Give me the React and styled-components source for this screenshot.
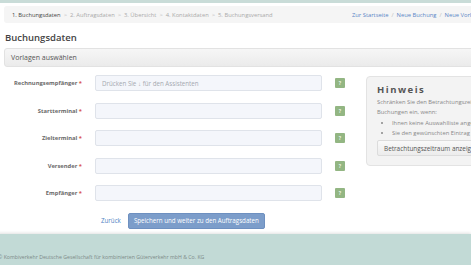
import React from 'react'
import styled, { createGlobalStyle } from 'styled-components'

const fields = ['Rechnungsempfänger', 'Startterminal', 'Zielterminal', 'Versender', 'Empfänger']
const steps = ['1. Buchungsdaten', '2. Auftragsdaten', '3. Übersicht', '4. Kontaktdaten', '5. Buchungsversand']
const links = ['Zur Startseite', 'Neue Buchung', 'Neue Vorlage']

const GlobalStyle = createGlobalStyle`
  html, body {
    margin: 0;
    padding: 0;
    background: #fff;
    overflow: hidden;
  }
  body {
    font-family: "Open Sans", "Liberation Sans", sans-serif;
    color: #555;
  }
`

const App = () => {
  return (
    <Page>
      <GlobalStyle />
      <TopStrip />
      <Main>
        <Breadcrumb>
          <Steps>
            {steps.map((s, i) => (
              <React.Fragment key={s}>
                {i > 0 && <Sep>&gt;</Sep>}
                <Step $active={i === 0}>{s}</Step>
              </React.Fragment>
            ))}
          </Steps>
          <Links>
            {links.map((l, i) => (
              <React.Fragment key={l}>
                {i > 0 && <Sep>/</Sep>}
                <LinkItem>{l}</LinkItem>
              </React.Fragment>
            ))}
          </Links>
        </Breadcrumb>

        <Heading>Buchungsdaten</Heading>
        <PanelHeader>Vorlagen auswählen</PanelHeader>

        <Content>
          <Form>
            {fields.map((f, i) => (
              <Row key={f}>
                <Label>{f} <Req>*</Req></Label>
                <Input placeholder={i === 0 ? 'Drücken Sie ↓ für den Assistenten' : ''} />
                <Help>?</Help>
              </Row>
            ))}
            <Actions>
              <BackLink>Zurück</BackLink>
              <PrimaryButton>Speichern und weiter zu den Auftragsdaten</PrimaryButton>
            </Actions>
          </Form>

          <Hint>
            <HintTitle>Hinweis</HintTitle>
            <HintText>Schränken Sie den Betrachtungszeitraum für die Anzeige der<br />Buchungen ein, wenn:</HintText>
            <HintList>
              <li>Ihnen keine Auswahlliste angezeigt wird</li>
              <li>Sie den gewünschten Eintrag nicht finden</li>
            </HintList>
            <HintButton>Betrachtungszeitraum anzeigen</HintButton>
          </Hint>
        </Content>
      </Main>
      <Footer>© Kombiverkehr Deutsche Gesellschaft für kombinierten Güterverkehr mbH &amp; Co. KG</Footer>
    </Page>
  )
}

const Page = styled.div`
  width: 471px;
  height: 265px;
  overflow: hidden;
  display: flex;
  flex-direction: column;
`

const TopStrip = styled.div`
  height: 3px;
  background: #c9dcd8;
  flex-shrink: 0;
`

const Main = styled.div`
  width: 600px;
  padding-left: 4px;
`

const Breadcrumb = styled.div`
  margin-top: 3px;
  height: 17px;
  background: #f5f5f5;
  border-radius: 3px;
  display: flex;
  align-items: center;
  padding: 0 8px;
  font-size: 5.8px;
  width: 520px;
`

const Steps = styled.div`
  width: 340px;
  flex-shrink: 0;
  display: flex;
  align-items: center;
  white-space: nowrap;
`

const Step = styled.span`
  color: ${p => (p.$active ? '#444' : '#aaa')};
`

const Sep = styled.span`
  color: #bbb;
  margin: 0 3px;
`

const Links = styled.div`
  display: flex;
  white-space: nowrap;
`

const LinkItem = styled.span`
  color: #5a85c6;
`

const Heading = styled.h1`
  margin: 8px 0 0 1px;
  font-size: 9.5px;
  line-height: 14px;
  font-weight: 600;
  color: #444;
`

const PanelHeader = styled.div`
  margin-top: 3px;
  height: 19px;
  box-sizing: border-box;
  padding-left: 6px;
  display: flex;
  align-items: center;
  font-size: 7px;
  color: #555;
  background: linear-gradient(#f6f6f6, #ebebeb);
  border: 1px solid #e2e2e2;
  border-radius: 3px;
`

const Content = styled.div`
  display: flex;
  align-items: flex-start;
  margin-top: 8px;
`

const Form = styled.div`
  display: flex;
  flex-direction: column;
  gap: 11.5px;
  padding-left: 1px;
`

const Row = styled.div`
  display: grid;
  grid-template-columns: 77px 227px 10px;
  column-gap: 13px;
  align-items: center;
  height: 16px;
`

const Label = styled.label`
  text-align: right;
  font-size: 5.8px;
  font-weight: 700;
  color: #6a6a6a;
  white-space: nowrap;
`

const Req = styled.span`
  color: #d9534f;
`

const Input = styled.input`
  box-sizing: border-box;
  height: 16px;
  width: 227px;
  border: 1px solid #dfe3ea;
  border-radius: 2px;
  background: #f4f6fb;
  padding: 0 6px;
  font-family: inherit;
  font-size: 6.2px;
  &::placeholder {
    color: #a5a9b0;
  }
`

const Help = styled.span`
  width: 10px;
  height: 10px;
  background: #93b683;
  color: #e8f2e2;
  font-size: 5px;
  font-weight: 700;
  display: flex;
  align-items: center;
  justify-content: center;
  border-radius: 1px;
`

const Actions = styled.div`
  display: flex;
  align-items: center;
  margin-left: 96px;
  gap: 7px;
`

const BackLink = styled.span`
  color: #4f7fc4;
  font-size: 6.2px;
`

const PrimaryButton = styled.button`
  height: 16px;
  padding: 0 5px;
  border: 1px solid #6e90c0;
  border-radius: 2px;
  background: #7c9dca;
  color: #fff;
  font-family: inherit;
  font-size: 6.2px;
  white-space: nowrap;
`

const Hint = styled.div`
  margin-left: 21px;
  margin-top: 1px;
  width: 220px;
  box-sizing: border-box;
  padding: 6px 10px 9px;
  background: #f3f3f3;
  border: 1px solid #e3e3e3;
  border-radius: 4px;
`

const HintTitle = styled.div`
  font-size: 9.5px;
  font-weight: 700;
  color: #555;
  letter-spacing: 1.5px;
  line-height: 14px;
`

const HintText = styled.p`
  margin: 1px 0 0;
  font-size: 5.8px;
  line-height: 9.5px;
  color: #888;
  white-space: nowrap;
`

const HintList = styled.ul`
  margin: 1px 0 0;
  padding-left: 15px;
  font-size: 5.8px;
  line-height: 10px;
  color: #888;
`

const HintButton = styled.div`
  margin-top: 2px;
  height: 16px;
  box-sizing: border-box;
  display: flex;
  align-items: center;
  padding-left: 6px;
  font-size: 6.4px;
  color: #555;
  background: linear-gradient(#f9f9f9, #ececec);
  border: 1px solid #dcdcdc;
  border-radius: 2px;
`

const Footer = styled.div`
  margin-top: 5px;
  flex: 1;
  background: #c2dad6;
  box-shadow: 0 -1px 3px rgba(0, 0, 0, 0.12);
  font-size: 5.2px;
  color: #7d8a88;
  padding: 19px 0 0 0;
  margin-left: -2px;
  white-space: nowrap;
`

export default App
